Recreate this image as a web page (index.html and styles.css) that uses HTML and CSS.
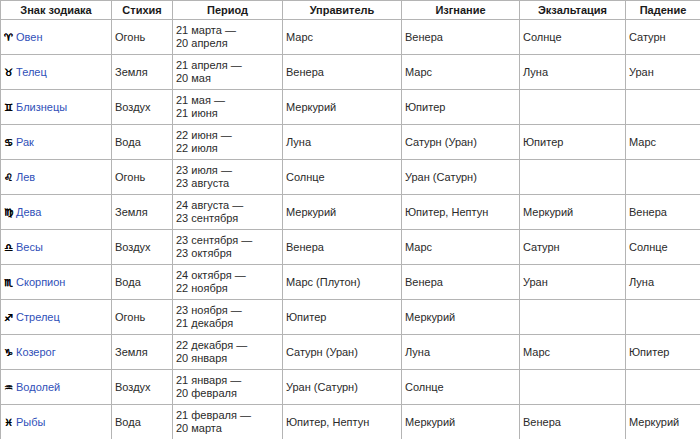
FILE: index.html
```html
<!DOCTYPE html>
<html lang="ru">
<head>
<meta charset="utf-8">
<title>Знаки зодиака</title>
<link rel="stylesheet" href="styles.css">
</head>
<body>
<table class="zodiac">
  <colgroup>
    <col class="c1"><col class="c2"><col class="c3"><col class="c4"><col class="c5"><col class="c6"><col class="c7">
  </colgroup>
  <thead>
    <tr>
      <th>Знак зодиака</th><th>Стихия</th><th>Период</th><th>Управитель</th><th>Изгнание</th><th>Экзальтация</th><th>Падение</th>
    </tr>
  </thead>
  <tbody>
    <tr><td><span class="sym">♈</span> <a href="#">Овен</a></td><td>Огонь</td><td>21 марта —<br>20 апреля</td><td>Марс</td><td>Венера</td><td>Солнце</td><td>Сатурн</td></tr>
    <tr><td><span class="sym">♉</span> <a href="#">Телец</a></td><td>Земля</td><td>21 апреля —<br>20 мая</td><td>Венера</td><td>Марс</td><td>Луна</td><td>Уран</td></tr>
    <tr><td><span class="sym">♊</span> <a href="#">Близнецы</a></td><td>Воздух</td><td>21 мая —<br>21 июня</td><td>Меркурий</td><td>Юпитер</td><td></td><td></td></tr>
    <tr><td><span class="sym">♋</span> <a href="#">Рак</a></td><td>Вода</td><td>22 июня —<br>22 июля</td><td>Луна</td><td>Сатурн (Уран)</td><td>Юпитер</td><td>Марс</td></tr>
    <tr><td><span class="sym">♌</span> <a href="#">Лев</a></td><td>Огонь</td><td>23 июля —<br>23 августа</td><td>Солнце</td><td>Уран (Сатурн)</td><td></td><td></td></tr>
    <tr><td><span class="sym">♍</span> <a href="#">Дева</a></td><td>Земля</td><td>24 августа —<br>23 сентября</td><td>Меркурий</td><td>Юпитер, Нептун</td><td>Меркурий</td><td>Венера</td></tr>
    <tr><td><span class="sym">♎</span> <a href="#">Весы</a></td><td>Воздух</td><td>23 сентября —<br>23 октября</td><td>Венера</td><td>Марс</td><td>Сатурн</td><td>Солнце</td></tr>
    <tr><td><span class="sym">♏</span> <a href="#">Скорпион</a></td><td>Вода</td><td>24 октября —<br>22 ноября</td><td>Марс (Плутон)</td><td>Венера</td><td>Уран</td><td>Луна</td></tr>
    <tr><td><span class="sym">♐</span> <a href="#">Стрелец</a></td><td>Огонь</td><td>23 ноября —<br>21 декабря</td><td>Юпитер</td><td>Меркурий</td><td></td><td></td></tr>
    <tr><td><span class="sym">♑</span> <a href="#">Козерог</a></td><td>Земля</td><td>22 декабря —<br>20 января</td><td>Сатурн (Уран)</td><td>Луна</td><td>Марс</td><td>Юпитер</td></tr>
    <tr><td><span class="sym">♒</span> <a href="#">Водолей</a></td><td>Воздух</td><td>21 января —<br>20 февраля</td><td>Уран (Сатурн)</td><td>Солнце</td><td></td><td></td></tr>
    <tr><td><span class="sym">♓</span> <a href="#">Рыбы</a></td><td>Вода</td><td>21 февраля —<br>20 марта</td><td>Юпитер, Нептун</td><td>Меркурий</td><td>Венера</td><td>Меркурий</td></tr>
  </tbody>
</table>
</body>
</html>
```

FILE: styles.css
```css
html, body {
  margin: 0;
  padding: 0;
  background: #ffffff;
}

.zodiac {
  border-collapse: collapse;
  table-layout: fixed;
  width: 700px;
  font-family: "Liberation Sans", Arial, sans-serif;
  font-size: 11px;
  color: #2a2a2a;
}

.c1 { width: 111px; }
.c2 { width: 61px; }
.c3 { width: 110px; }
.c4 { width: 119px; }
.c5 { width: 118px; }
.c6 { width: 106px; }
.c7 { width: 75px; }

.zodiac th,
.zodiac td {
  border: 1px solid #b4b4b4;
  padding: 0 3px;
  vertical-align: middle;
  overflow: hidden;
  white-space: nowrap;
}

.zodiac th {
  height: 18px;
  font-weight: bold;
  text-align: center;
  color: #1a1a1a;
  background: #ffffff;
}

.zodiac td {
  height: 34px;
  line-height: 13px;
  text-align: left;
}

.zodiac a {
  color: #3050b8;
  text-decoration: none;
}

.sym {
  font-family: "DejaVu Sans", sans-serif;
  font-weight: bold;
  font-size: 10px;
  color: #000000;
  text-shadow: 0.5px 0 0 #000000, 0 0.4px 0 #000000;
}
```
